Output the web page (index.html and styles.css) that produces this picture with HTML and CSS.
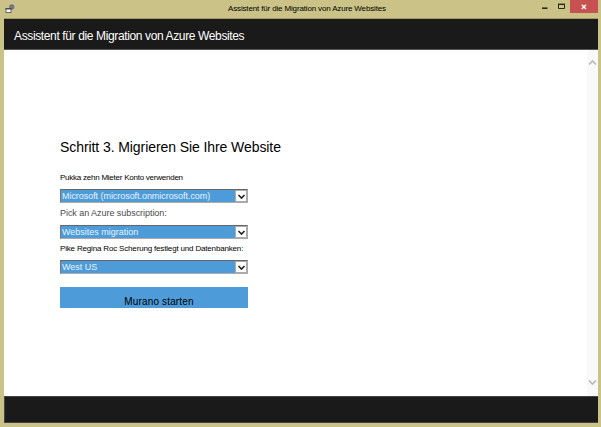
FILE: index.html
```html
<!DOCTYPE html>
<html lang="de">
<head>
<meta charset="utf-8">
<title>Assistent für die Migration von Azure Websites</title>
<link rel="stylesheet" href="styles.css">
</head>
<body>
<div class="window">
  <div class="titlebar">
    <svg class="app-icon" width="12" height="12" viewBox="0 0 12 12"><circle cx="6.8" cy="4" r="3.3" fill="#77776f" stroke="#d9d6b8" stroke-width=".8"/><rect x="1" y="5.5" width="5" height="4" fill="#fff" stroke="#66665c"/><path d="M.5 5.8h6" stroke="#4c4c48" stroke-width="1.4"/></svg>
    <div class="caption"><span>Assistent für die Migration von Azure Websites</span></div>
    <div class="controls">
      <svg width="30" height="13" viewBox="0 0 30 13"><path d="M2 8.2h5.5" stroke="#2b291b" stroke-width="1.6"/><path d="M18.5 4.5h6v4h-6z" fill="none" stroke="#2b291b"/><path d="M18 4.3h7" stroke="#2b291b" stroke-width="1.4"/></svg>
      <div class="close"><svg width="6" height="6" viewBox="0 0 6 6"><path d="M.8 .8l4.2 4.2M5 .8L.8 5" stroke="#fff" stroke-width="1.3"/></svg></div>
    </div>
  </div>
  <header class="header"><span>Assistent für die Migration von Azure Websites</span></header>
  <div class="body">
    <main class="content">
      <h1><span>Schritt 3. Migrieren Sie Ihre Website</span></h1>
      <label class="label first">Pukka zehn Mieter Konto verwenden</label>
      <div class="select"><span class="value v1">Microsoft (microsoft.onmicrosoft.com)</span><span class="arrow"><svg width="9" height="7" viewBox="0 0 9 7"><path d="M1.5 2l3 3L7.5 2" fill="none" stroke="#222" stroke-width="1.6"/></svg></span></div>
      <label class="label grey">Pick an Azure subscription:</label>
      <div class="select"><span class="value">Websites migration</span><span class="arrow"><svg width="9" height="7" viewBox="0 0 9 7"><path d="M1.5 2l3 3L7.5 2" fill="none" stroke="#222" stroke-width="1.6"/></svg></span></div>
      <label class="label third">Pike Regina Roc Scherung festlegt und Datenbanken:</label>
      <div class="select"><span class="value">West US</span><span class="arrow"><svg width="9" height="7" viewBox="0 0 9 7"><path d="M1.5 2l3 3L7.5 2" fill="none" stroke="#222" stroke-width="1.6"/></svg></span></div>
      <div class="button"><span>Murano starten</span></div>
    </main>
    <div class="scrollbar">
      <svg width="9" height="7" viewBox="0 0 9 7"><path d="M1 5.5L4.5 2 8 5.5" fill="none" stroke="#b9b9b9" stroke-width="1.7"/></svg>
      <svg width="9" height="7" viewBox="0 0 9 7"><path d="M1 1.5L4.5 5 8 1.5" fill="none" stroke="#b9b9b9" stroke-width="1.7"/></svg>
    </div>
  </div>
  <footer class="footer"></footer>
</div>
</body>
</html>
```
FILE: styles.css
```css
* { box-sizing: border-box; }
body { margin: 0; font-family: "Liberation Sans", Arial, sans-serif; color: #000; }
.window { width: 601px; height: 427px; background: #cac286; padding: 0 3px 4px 4px; display: flex; flex-direction: column; overflow: hidden; white-space: nowrap; }
.titlebar { height: 19px; flex: none; display: flex; align-items: flex-start; border-bottom: 1px solid #a19a66; }
.app-icon { margin: 3px 0 0 1px; }
.caption { flex: 1; padding-left: 211px; font-size: 8px; line-height: 17px; letter-spacing: -0.15px; }
.controls { display: flex; }
.close { width: 28px; height: 13px; background: #c75050; display: flex; align-items: center; justify-content: center; }
.header { height: 31px; flex: none; background: #1a1a1a; border-bottom: 1px solid #555; padding-left: 10px; color: #fff; font-size: 12px; line-height: 34px; letter-spacing: -0.37px; }
.body { height: 346px; flex: none; background: #fff; display: flex; }
.content { flex: 1; padding: 88px 0 0 56px; }
h1 { margin: 0; font-size: 14px; line-height: 18px; font-weight: 400; letter-spacing: -0.08px; }
.label { display: block; font-size: 8px; height: 22px; line-height: 21px; }
.first { height: 17px; line-height: 12px; margin-top: 16px; letter-spacing: -0.24px; }
.third { height: 21px; line-height: 20px; letter-spacing: -0.17px; }
.grey { color: #4a4a4a; font-size: 9px; letter-spacing: -0.05px; }
.select { width: 188px; height: 14px; border: 1px solid #aaa; border-top: 1px solid #666; border-left-color: #777; background: #4d9bd8; display: flex; }
.value { flex: 1; color: #e9f4fc; font-size: 9px; line-height: 12px; padding-left: 1px; }
.v1 { letter-spacing: -0.05px; }
.arrow { width: 12px; height: 12px; background: #fff; border: 1px solid #aaa; display: flex; align-items: center; justify-content: center; }
.button { width: 188px; height: 21px; margin-top: 13px; background: #4d9bd8; padding-left: 10px; text-align: center; font-size: 10px; line-height: 29px; letter-spacing: 0.15px; }
.scrollbar { width: 11px; background: #f9f9f9; display: flex; flex-direction: column; justify-content: space-between; align-items: center; padding: 9px 0 10px; }
.footer { height: 27px; flex: none; background: #1a1a1a; border: 1px solid #444; border-right: 0; }
```
